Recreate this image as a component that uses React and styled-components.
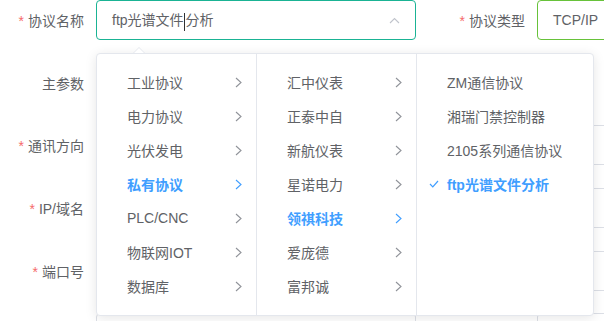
import React from 'react';
import styled, { createGlobalStyle } from 'styled-components';

const GlobalStyle = createGlobalStyle`
  html, body {
    margin: 0;
    padding: 0;
    background: #fff;
    overflow: hidden;
  }
  body {
    font-family: "Liberation Sans", "Noto Sans CJK SC", sans-serif;
    font-size: 14px;
    color: #606266;
  }
`;

const Page = styled.div`
  position: relative;
  width: 604px;
  height: 321px;
  overflow: hidden;
`;

const Form = styled.div`
  display: flex;
  flex-direction: column;
  gap: 22.67px;
`;

const Row = styled.div`
  display: flex;
  align-items: center;
  height: 40px;
`;

const Label = styled.div`
  box-sizing: border-box;
  width: ${(p) => p.$w}px;
  flex: none;
  padding-right: 12px;
  text-align: right;
  color: #606266;
  font-size: 14px;
  white-space: nowrap;
`;

const Star = styled.span`
  color: #f56c6c;
  margin-right: 4px;
`;

const Input = styled.div`
  box-sizing: border-box;
  width: 320px;
  flex: none;
  height: 40px;
  border: 1px solid ${(p) => p.$border || '#dcdfe6'};
  border-radius: 4px;
  padding: 0 15px;
  display: flex;
  align-items: center;
  justify-content: space-between;
  color: #606266;
  font-size: 14px;
  background: #fff;
`;

const Caret = styled.span`
  display: inline-block;
  width: 1px;
  height: 18px;
  background: #303133;
  vertical-align: middle;
  margin: 0 0.5px;
`;

const Spacer = styled.div`
  width: 320px;
  flex: none;
`;

const Dropdown = styled.div`
  position: absolute;
  left: 96px;
  top: 53px;
  display: flex;
  background: #fff;
  border: 1px solid #e4e7ed;
  border-radius: 4px;
  box-shadow: 0 2px 12px 0 rgba(0, 0, 0, 0.1);
`;

const PopArrow = styled.div`
  position: absolute;
  left: 36px;
  top: -7px;
  width: 0;
  height: 0;
  border-left: 6px solid transparent;
  border-right: 6px solid transparent;
  border-bottom: 6px solid #e4e7ed;

  &::after {
    content: '';
    position: absolute;
    left: -5px;
    top: 1px;
    border-left: 5px solid transparent;
    border-right: 5px solid transparent;
    border-bottom: 5px solid #fff;
  }
`;

const Menu = styled.ul`
  list-style: none;
  margin: 0;
  padding: 11px 0 12px;
  box-sizing: border-box;
  width: ${(p) => p.$w}px;
  border-right: ${(p) => (p.$last ? 'none' : '1px solid #e4e7ed')};
`;

const Node = styled.li`
  position: relative;
  height: 34px;
  padding: 0 14px 0 30px;
  display: flex;
  align-items: center;
  justify-content: space-between;
  color: ${(p) => (p.$active ? '#409eff' : '#606266')};
  font-weight: ${(p) => (p.$active ? 700 : 400)};
  font-size: 14px;
  white-space: nowrap;
`;

const Check = styled.svg`
  position: absolute;
  left: 12px;
  top: 13px;
`;

const Chevron = ({ color }) => (
  <svg width="7" height="11" viewBox="0 0 7 11">
    <polyline points="1,1 6,5.5 1,10" fill="none" stroke={color} strokeWidth="1.1" />
  </svg>
);

const col1 = ['工业协议', '电力协议', '光伏发电', '私有协议', 'PLC/CNC', '物联网IOT', '数据库'];
const col2 = ['汇中仪表', '正泰中自', '新航仪表', '星诺电力', '领祺科技', '爱庞德', '富邦诚'];
const col3 = ['ZM通信协议', '湘瑞门禁控制器', '2105系列通信协议', 'ftp光谱文件分析'];

const App = () => (
  <Page>
    <GlobalStyle />
    <Form>
      <Row>
        <Label $w={96}><Star>*</Star>协议名称</Label>
        <Input $border="#1ab394">
          <span>ftp光谱文件<Caret />分析</span>
          <svg width="11" height="7" viewBox="0 0 11 7">
            <polyline points="1,6 5.5,1.5 10,6" fill="none" stroke="#c0c4cc" strokeWidth="1.1" />
          </svg>
        </Input>
        <Label $w={121}><Star>*</Star>协议类型</Label>
        <Input $border="#67c23a">TCP/IP</Input>
      </Row>
      <Row>
        <Label $w={96}>主参数</Label>
        <Spacer />
      </Row>
      <Row>
        <Label $w={96}><Star>*</Star>通讯方向</Label>
        <Input />
        <Label $w={121}><Star>*</Star>通讯模式</Label>
        <Input />
      </Row>
      <Row>
        <Label $w={96}><Star>*</Star>IP/域名</Label>
        <Input />
        <Label $w={121}><Star>*</Star>超时时间</Label>
        <Input />
      </Row>
      <Row>
        <Label $w={96}><Star>*</Star>端口号</Label>
        <Input />
        <Label $w={121}><Star>*</Star>采集周期</Label>
        <Input />
      </Row>
      <Row>
        <Label $w={96} />
        <Input />
        <Label $w={121} />
        <Input />
      </Row>
    </Form>

    <Dropdown>
      <PopArrow />
      <Menu $w={160}>
        {col1.map((t) => (
          <Node key={t} $active={t === '私有协议'}>
            {t}
            <Chevron color={t === '私有协议' ? '#409eff' : '#909399'} />
          </Node>
        ))}
      </Menu>
      <Menu $w={160}>
        {col2.map((t) => (
          <Node key={t} $active={t === '领祺科技'}>
            {t}
            <Chevron color={t === '领祺科技' ? '#409eff' : '#909399'} />
          </Node>
        ))}
      </Menu>
      <Menu $w={176} $last>
        {col3.map((t) => (
          <Node key={t} $active={t === 'ftp光谱文件分析'}>
            {t === 'ftp光谱文件分析' && (
              <Check width="10" height="8" viewBox="0 0 10 8">
                <polyline points="1,4 3.8,6.8 9,1" fill="none" stroke="#409eff" strokeWidth="1.2" />
              </Check>
            )}
            {t}
          </Node>
        ))}
      </Menu>
    </Dropdown>
  </Page>
);

export default App;
